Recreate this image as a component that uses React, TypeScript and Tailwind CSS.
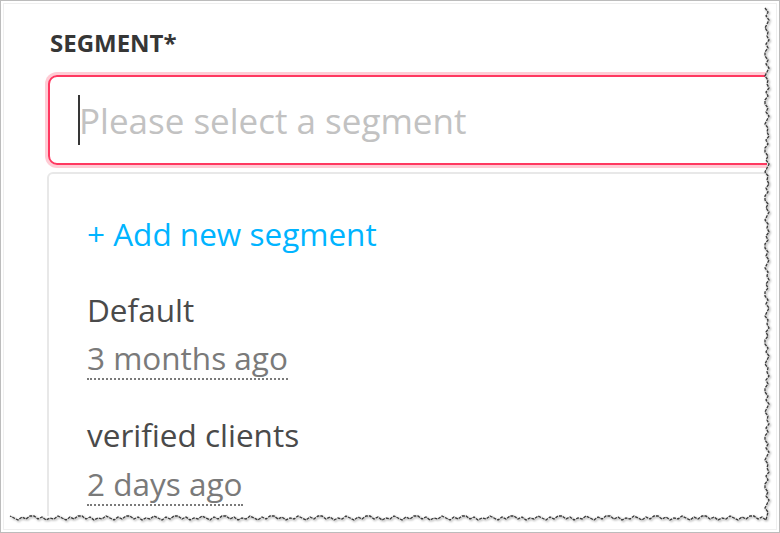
import React from 'react';

const font = { fontFamily: '"Open Sans", "Noto Sans", sans-serif' };

// deterministic jitter for the torn paper edge
const jitter = (i: number) => [0, 3, 1, 4, 2, 0, 3, 2, 4, 1, 3, 0][i % 12];

function TornEdges() {
	const right: string[] = [];
	let i = 0;
	for (let y = 8; y <= 516; y += 4) {
		right.push(`${765 + jitter(i++)},${y}`);
	}
	const bottom: string[] = [];
	for (let x = 766; x >= 10; x -= 4) {
		bottom.push(`${x},${516 + jitter(i++)}`);
	}
	const edge = [...right, ...bottom].join(' ');
	return (
		<svg className="absolute inset-0 pointer-events-none" width={780} height={533}>
			<defs>
				<filter id="sh" x="-10%" y="-10%" width="120%" height="120%">
					<feDropShadow dx="1" dy="1" stdDeviation="0.8" floodColor="#000" floodOpacity="0.5" />
				</filter>
			</defs>
			<polygon points={`765,3 777,3 777,530 3,530 3,516 ${[...bottom].reverse().reverse().join(' ')} ${[...right].reverse().join(' ')}`} fill="#ffffff" />
			<polygon points={`765,0 780,0 780,533 0,533 0,516 10,516 ${[...bottom].reverse().join(' ')} ${[...right].reverse().join(' ')}`} fill="#ffffff" />
			<polyline points={edge} fill="none" stroke="#3a3a3a" strokeWidth="1.3" strokeDasharray="3 1" filter="url(#sh)" />
			<rect x="0.5" y="0.5" width="779" height="532" fill="none" stroke="#bcbcbc" />
			<rect x="3.5" y="3.5" width="773" height="526" fill="none" stroke="#efefef" />
		</svg>
	);
}

export default function App() {
	return (
		<div className="relative w-[780px] h-[533px] bg-white overflow-hidden" style={font}>
			<div className="w-[767px] h-[518px] overflow-hidden pl-[48px] pt-[27px]">
				<div className="text-[24px] font-bold text-[#363636] leading-[32px] pl-[2px]">SEGMENT*</div>
				<div className="mt-[16px] w-[760px] h-[90px] rounded-[9px] border-2 border-[#ff3860] shadow-[0_0_0_3px_#ffccd5] flex items-center pl-[28px]">
					<span className="w-[2px] h-[50px] bg-[#363636]" />
					<span className="text-[35px] text-[#c2c2c2] leading-none -ml-[1px]">Please select a segment</span>
				</div>
				<div className="mt-[7px] -ml-[1px] w-[760px] h-[400px] rounded-t-[6px] border-2 border-[#e8e8e8] pl-[38px] pt-[40px]">
					<div className="text-[31.5px] text-[#00b4ff] leading-[40px]">+ Add new segment</div>
					<div className="mt-[36px] text-[31.5px] text-[#4a4a4a] leading-[40px]">Default</div>
					<div className="mt-[8px] text-[31.5px] text-[#7a7a7a] leading-[40px] inline-block border-b-2 border-dotted border-[#7a7a7a]">3 months ago</div>
					<div className="mt-[35px] text-[31.5px] text-[#4a4a4a] leading-[40px]">verified clients</div>
					<div className="mt-[9px] text-[31.5px] text-[#7a7a7a] leading-[40px] inline-block border-b-2 border-dotted border-[#7a7a7a]">2 days ago</div>
				</div>
			</div>
			<TornEdges />
		</div>
	);
}
